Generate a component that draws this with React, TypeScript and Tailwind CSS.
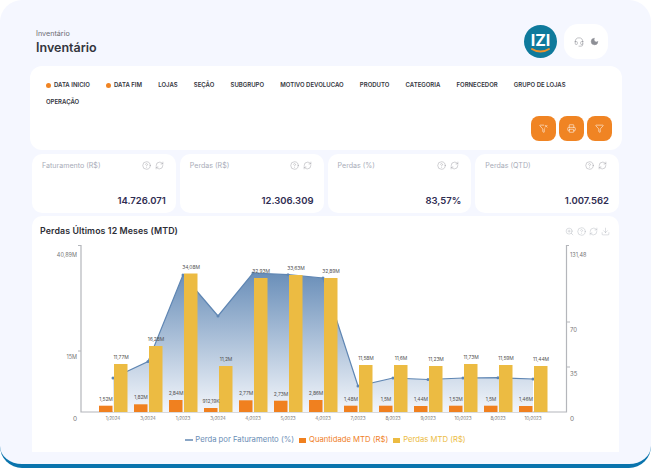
import { CircleHelp, RefreshCw, ZoomIn, Download, Headset, Moon, Printer, Funnel, FunnelX } from "lucide-react";

const filters = [
    { label: "DATA INICIO", dot: true },
    { label: "DATA FIM", dot: true },
    { label: "LOJAS" },
    { label: "SEÇÃO" },
    { label: "SUBGRUPO" },
    { label: "MOTIVO DEVOLUCAO" },
    { label: "PRODUTO" },
    { label: "CATEGORIA" },
    { label: "FORNECEDOR" },
    { label: "GRUPO DE LOJAS" },
    { label: "OPERAÇÃO" },
];

const kpis = [
    { title: "Faturamento (R$)", value: "14.726.071" },
    { title: "Perdas (R$)", value: "12.306.309" },
    { title: "Perdas (%)", value: "83,57%" },
    { title: "Perdas (QTD)", value: "1.007.562" },
];

const months = [
    { x: "1/2024", qty: "1,52M", qtyTop: 405.7, loss: "11,77M", lossTop: 364, lineY: 378 },
    { x: "3/2024", qty: "1,82M", qtyTop: 404.3, loss: "16,28M", lossTop: 346, lineY: 361.6 },
    { x: "1/2023", qty: "2,84M", qtyTop: 400, loss: "34,08M", lossTop: 273.5, lineY: 275 },
    { x: "3/2024", qty: "912,19K", qtyTop: 408, loss: "11,2M", lossTop: 366, lineY: 316 },
    { x: "4/2023", qty: "2,77M", qtyTop: 400.3, loss: "32,93M", lossTop: 278, lineY: 273 },
    { x: "5/2023", qty: "2,73M", qtyTop: 400.7, loss: "33,63M", lossTop: 275, lineY: 274.7 },
    { x: "4/2023", qty: "2,86M", qtyTop: 400, loss: "32,89M", lossTop: 278, lineY: 278 },
    { x: "7/2023", qty: "1,48M", qtyTop: 405.7, loss: "11,58M", lossTop: 365, lineY: 386 },
    { x: "8/2023", qty: "1,5M", qtyTop: 405.7, loss: "11,6M", lossTop: 365, lineY: 378 },
    { x: "9/2023", qty: "1,44M", qtyTop: 406, loss: "11,23M", lossTop: 366, lineY: 379.5 },
    { x: "10/2023", qty: "1,52M", qtyTop: 405.7, loss: "11,73M", lossTop: 364, lineY: 378 },
    { x: "8/2023", qty: "1,5M", qtyTop: 405.7, loss: "11,59M", lossTop: 365, lineY: 377.7 },
    { x: "10/2023", qty: "1,46M", qtyTop: 406, loss: "11,44M", lossTop: 366, lineY: 379 },
];

const baseY = 412;
const centerX = (i: number) => 113 + i * 35;

function Chart() {
    const line = months.map((m, i) => `${centerX(i)},${m.lineY}`).join(" ");
    const area = `${centerX(0)},${baseY} ${line} ${centerX(12)},${baseY}`;

    return (
        <svg viewBox="32 242 588 184" className="block h-[184px] w-[588px]">
            <defs>
                <linearGradient id="areaFill" x1="0" y1="0" x2="0" y2="1">
                    <stop offset="0%" stopColor="#6a8fb9" />
                    <stop offset="100%" stopColor="#f3f6fb" />
                </linearGradient>
            </defs>

            <path d="M78 245.5H81V412H566.5V245.5H569" fill="none" stroke="#b4b6bb" strokeWidth="1.2" />
            <path d="M78 351H81M566.5 322H570M566.5 367H570" stroke="#b4b6bb" strokeWidth="1" />

            <polygon points={area} fill="url(#areaFill)" />
            <polyline points={line} fill="none" stroke="#5f86b3" strokeWidth="1.2" />
            {months.map((m, i) => (
                <circle key={i} cx={centerX(i)} cy={m.lineY} r="1.5" fill="#5f86b3" />
            ))}

            {months.map((m, i) => (
                <g key={i}>
                    <rect x={centerX(i) - 14} y={m.qtyTop} width="13.5" height={baseY - m.qtyTop} fill="#f0801f" />
                    <rect x={centerX(i) + 1} y={m.lossTop} width="13.5" height={baseY - m.lossTop} fill="#ecbb42" />
                </g>
            ))}

            <g fontSize="5" fill="#555" textAnchor="middle" letterSpacing="-0.1">
                {months.map((m, i) => (
                    <g key={i}>
                        <text x={centerX(i) - 7} y={m.qtyTop - 5}>{m.qty}</text>
                        <text x={centerX(i) + 8} y={m.lossTop - 5}>{m.loss}</text>
                        <text x={centerX(i)} y="420" fill="#777" fontSize="4.6">{m.x}</text>
                    </g>
                ))}
            </g>

            <g fontSize="5.5" fill="#777">
                <text x="77" y="257" textAnchor="end">40,89M</text>
                <text x="77" y="358.5" textAnchor="end">15M</text>
                <text x="77" y="421" textAnchor="end" fontSize="6.5">0</text>
                <text x="570" y="257">131,48</text>
                <text x="570" y="331.5" fontSize="6">70</text>
                <text x="570" y="375.5" fontSize="6">35</text>
                <text x="570" y="421" fontSize="6.5">0</text>
            </g>
        </svg>
    );
}

export default function App() {
    return (
        <div className="h-[468px] w-[651px] overflow-hidden bg-white [font-family:Inter,sans-serif]">
            <div className="h-full rounded-[22px] border-b-4 border-[#0a74ad] bg-[#f5f7ff] pt-6">
                <div className="flex items-start justify-between pl-9 pr-[43px]">
                    <div className="pt-[5px]">
                        <p className="text-[7.2px] leading-[10px] text-[#6b6b72]">Inventário</p>
                        <h1 className="mt-[1px] text-[12.5px] font-semibold leading-4 text-[#33353d]">Inventário</h1>
                    </div>
                    <div className="flex items-center gap-[7px]">
                        <svg viewBox="0 0 33 33" className="h-[33px] w-[33px]">
                            <circle cx="16.5" cy="16.5" r="16.5" fill="#0f7a9c" />
                            <path d="M8 24c5 3.4 12 3.4 17 0" fill="none" stroke="#f0932b" strokeWidth="2" strokeLinecap="round" />
                            <text x="16.5" y="20.5" textAnchor="middle" fontSize="16" fontWeight="700" fill="#fff">IZI</text>
                        </svg>
                        <div className="flex h-[35px] w-11 items-center justify-center gap-[6px] rounded-[14px] bg-white text-[#8d8f96]">
                            <Headset size={10} strokeWidth={1.3} />
                            <Moon size={9} fill="#8d8f96" strokeWidth={1} />
                        </div>
                    </div>
                </div>

                <div className="ml-[30px] mt-[7px] h-[84px] w-[592px] rounded-xl bg-white pl-[16px] pr-2 pt-4">
                    <div className="flex flex-wrap gap-x-[16.2px] gap-y-[11px] pr-4">
                        {filters.map((f) => (
                            <span key={f.label} className="flex h-[6px] items-center gap-[3px] whitespace-nowrap text-[6px] font-semibold leading-none text-[#33353d]">
                                {f.dot && <span className="h-[5px] w-[5px] rounded-full bg-[#f08423]" />}
                                {f.label}
                            </span>
                        ))}
                    </div>
                    <div className="mr-[2px] mt-[11px] flex justify-end gap-[3px]">
                        <button className="flex h-[25px] w-[25px] items-center justify-center rounded-lg bg-[#f08423] text-white">
                            <FunnelX size={9} strokeWidth={1.5} />
                        </button>
                        <button className="flex h-[25px] w-[25px] items-center justify-center rounded-lg bg-[#f08423] text-white">
                            <Printer size={9} strokeWidth={1.5} />
                        </button>
                        <button className="flex h-[25px] w-[25px] items-center justify-center rounded-lg bg-[#f08423] text-white">
                            <Funnel size={9} strokeWidth={1.5} />
                        </button>
                    </div>
                </div>

                <div className="mx-8 mt-1 grid grid-cols-4 gap-1">
                    {kpis.map((k) => (
                        <div key={k.title} className="h-[59px] rounded-[10px] bg-white pb-[7px] pl-[10px] pr-[10px] pt-[7px]">
                            <div className="flex items-center justify-between">
                                <span className="text-[7.1px] leading-none text-[#a8acb8]">{k.title}</span>
                                <span className="flex gap-1 pr-[2px] text-[#85878f]">
                                    <CircleHelp size={9} strokeWidth={1} />
                                    <RefreshCw size={9} strokeWidth={1} />
                                </span>
                            </div>
                            <p className="mt-[23px] text-right text-[9.5px] font-semibold leading-4 text-[#2f2d52]">{k.value}</p>
                        </div>
                    ))}
                </div>

                <div className="mx-8 mt-[3px] h-[236px] rounded-t-[10px] bg-white">
                    <div className="flex h-[26px] items-start justify-between pl-2 pr-[9px] pt-[9px]">
                        <h2 className="text-[8.8px] font-semibold leading-3 tracking-[0.1px] text-[#2d2e36]">Perdas Últimos 12 Meses (MTD)</h2>
                        <span className="mt-[2px] flex gap-[3px] text-[#a5a8b0]">
                            <ZoomIn size={9} strokeWidth={1} />
                            <CircleHelp size={9} strokeWidth={1} />
                            <RefreshCw size={9} strokeWidth={1} />
                            <Download size={9} strokeWidth={1} />
                        </span>
                    </div>
                    <Chart />
                    <div className="mt-2 flex items-center justify-center text-[7.7px] leading-3">
                        <span className="flex items-center gap-[2px] text-[#6a8db5]">
                            <span className="h-[1.5px] w-[8px] bg-[#8aa6c6]" />
                            Perda por Faturamento (%)
                        </span>
                        <span className="ml-[5px] flex items-center gap-[3px] text-[#f0801f]">
                            <span className="h-[5px] w-[7px] bg-[#f0801f]" />
                            Quantidade MTD (R$)
                        </span>
                        <span className="ml-[5px] flex items-center gap-[3px] text-[#ecbb42]">
                            <span className="h-[5px] w-[7px] bg-[#ecbb42]" />
                            Perdas MTD (R$)
                        </span>
                    </div>
                </div>
            </div>
        </div>
    );
}
